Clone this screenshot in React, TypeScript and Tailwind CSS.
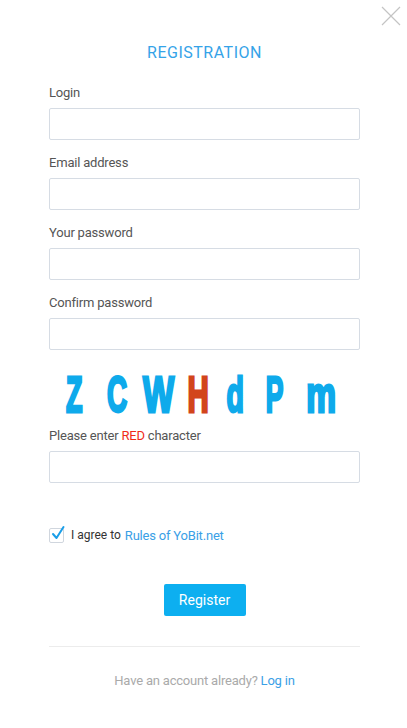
import React from "react";

const font = { fontFamily: "Roboto, 'Noto Sans', sans-serif" };

function Field({ label }: { label: string }) {
  return (
    <div className="flex flex-col">
      <div className="text-[13px] leading-[18px] tracking-[-0.2px] text-[#555]">{label}</div>
      <div className="mt-[6px] h-[32px] w-full rounded-[2px] border border-[#d6dce4] bg-white" />
    </div>
  );
}

const letters: { c: string; ml: string; sc: string; red?: boolean }[] = [
  { c: "Z", ml: "ml-0", sc: "scale-x-[0.54]" },
  { c: "C", ml: "ml-[3px]", sc: "scale-x-[0.56]" },
  { c: "W", ml: "ml-[2px]", sc: "scale-x-[0.66]" },
  { c: "H", ml: "ml-[-1px]", sc: "scale-x-[0.59]", red: true },
  { c: "d", ml: "ml-[-3px]", sc: "scale-x-[0.57]" },
  { c: "P", ml: "ml-0", sc: "scale-x-[0.53]" },
  { c: "m", ml: "ml-[6px]", sc: "scale-x-[0.67]" },
];

export default function App() {
  return (
    <div className="relative h-[728px] w-full bg-white" style={font}>
      <svg className="absolute left-[381px] top-[6px]" width="20" height="20" viewBox="0 0 20 20">
        <path d="M1 1 L19 19 M19 1 L1 19" stroke="#c4c4c4" strokeWidth="1.2" fill="none" />
      </svg>
      <div className="flex flex-col pl-[49px] pr-[47px]">
        <div className="mt-[43px] text-center text-[16px] leading-[20px] tracking-[0.5px] text-[#35a3e8]">
          REGISTRATION
        </div>
        <div className="mt-[21px] flex flex-col gap-[14px]">
          <Field label="Login" />
          <Field label="Email address" />
          <Field label="Your password" />
          <Field label="Confirm password" />
        </div>
        <div
          className="mt-[25px] flex h-[40px] pl-[5px] text-[50px] font-bold leading-[40px]"
          style={{ fontFamily: "'Liberation Sans', Arial, sans-serif" }}
        >
          {letters.map((l) => (
            <span key={l.c} className={`flex w-[40px] justify-center ${l.ml}`}>
              <span
                className={`inline-block [-webkit-text-stroke:3px_currentColor] ${l.sc} ${
                  l.red ? "text-[#d2451c]" : "text-[#0eaaeb]"
                }`}
              >
                {l.c}
              </span>
            </span>
          ))}
        </div>
        <div className="mt-[12px] flex flex-col">
          <div className="text-[13px] leading-[18px] tracking-[-0.2px] text-[#555]">
            Please enter <span className="text-[#f02a1a]">RED</span> character
          </div>
          <div className="mt-[6px] h-[32px] w-full rounded-[2px] border border-[#d6dce4] bg-white" />
        </div>
        <div className="mt-[45px] flex h-[15px] items-center">
          <div className="relative h-[15px] w-[15px] rounded-[2px] border border-[#d0d6de] bg-white">
            <svg className="absolute left-[1px] top-[-4px]" width="14" height="16" viewBox="0 0 14 16">
              <path d="M2 9 L5.5 13 L12.5 2" stroke="#1a9ee8" strokeWidth="2" fill="none" strokeLinecap="round" strokeLinejoin="round" />
            </svg>
          </div>
          <span className="ml-[7px] text-[12px] leading-[15px] text-[#333]">I agree to</span>
          <span className="ml-[4px] text-[13px] leading-[15px] tracking-[-0.2px] text-[#3aa0e6]">Rules of YoBit.net</span>
        </div>
        <div className="mt-[41px] flex justify-center">
          <button className="h-[32px] w-[82px] rounded-[2px] bg-[#0daff0] text-[14px] text-white">
            Register
          </button>
        </div>
        <div className="mt-[30px] h-px w-full bg-[#ececec]" />
        <div className="mt-[25px] text-center text-[13px] leading-[18px] tracking-[-0.2px] text-[#aaa]">
          Have an account already? <span className="text-[#3aa0e6]">Log in</span>
        </div>
      </div>
    </div>
  );
}
